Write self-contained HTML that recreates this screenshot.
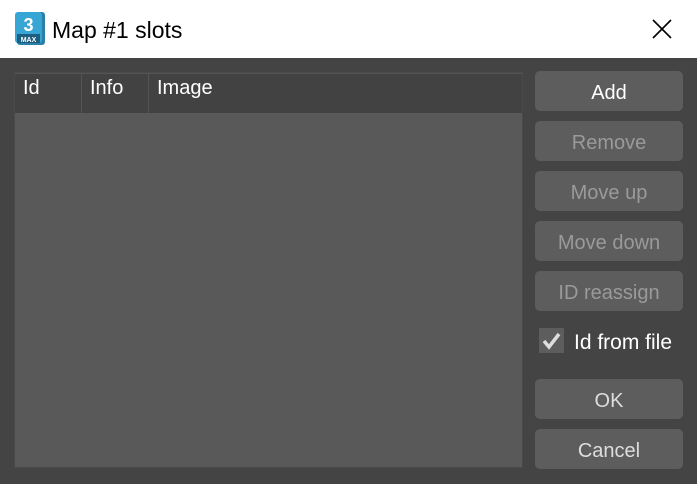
<!DOCTYPE html><html><head><style>
body{margin:0;width:697px;height:484px;background:#444;font-family:"Liberation Sans",sans-serif;position:relative;overflow:hidden}
.t{position:absolute;left:0;top:0;width:697px;height:58px;background:#fff;border-bottom:1px solid #444}
.t span{position:absolute;left:52px;top:17px;font-size:23px;color:#000}
.list{position:absolute;left:14px;top:72px;width:509px;height:396px;background:#595959;border:1px solid #4a4a4a;box-sizing:border-box}
.hd{position:absolute;left:0;top:0;width:100%;height:39px;background:#424242;border-top:1px solid #555}
.hd div{position:absolute;top:0;height:39px;border-right:1px solid #555;color:#fff;font-size:20px;padding:3px 0 0 8px;box-sizing:border-box}
.b{position:absolute;left:535px;width:148px;height:40px;background:#5d5d5d;border-radius:5px;color:#fff;font-size:20px;text-align:center;line-height:44px}
.d{color:#9a9a9a}
</style></head><body>
<div class="t">
<svg style="position:absolute;left:15px;top:12px" width="30" height="33"><rect x="2" y="0" width="28" height="33" rx="3" fill="#2a7fa8"/><rect x="0" y="0" width="27" height="31" rx="3" fill="#38a6d5"/><rect x="2" y="22" width="23" height="9" fill="#1c5e80"/><text x="13.5" y="19" font-size="18" font-weight="bold" fill="#fff" text-anchor="middle" font-family="Liberation Sans">3</text><text x="13.5" y="30" font-size="7" font-weight="bold" fill="#fff" text-anchor="middle" font-family="Liberation Sans">MAX</text></svg>
<span>Map #1 slots</span>
<svg style="position:absolute;left:652px;top:19px" width="20" height="20"><path d="M1 1L19 19M19 1L1 19" stroke="#000" stroke-width="1.6"/></svg>
</div>
<div class="list"><div class="hd"><div style="left:0;width:67px">Id</div><div style="left:67px;width:67px">Info</div><div style="left:134px;width:375px;border:0">Image</div></div></div>
<div class="b" style="top:71px">Add</div>
<div class="b d" style="top:121px">Remove</div>
<div class="b d" style="top:171px">Move up</div>
<div class="b d" style="top:221px">Move down</div>
<div class="b d" style="top:271px">ID reassign</div>
<div style="position:absolute;left:539px;top:328px;width:25px;height:25px;background:#5d5d5d"></div>
<svg style="position:absolute;left:539px;top:328px" width="25" height="25"><path d="M5 13L10 19L20 6" stroke="#ddd" stroke-width="3.5" fill="none"/></svg>
<div style="position:absolute;left:574px;top:331px;color:#fff;font-size:21px">Id from file</div>
<div class="b" style="top:379px;color:#ddd">OK</div>
<div class="b" style="top:429px;color:#ddd">Cancel</div>
</body></html>
